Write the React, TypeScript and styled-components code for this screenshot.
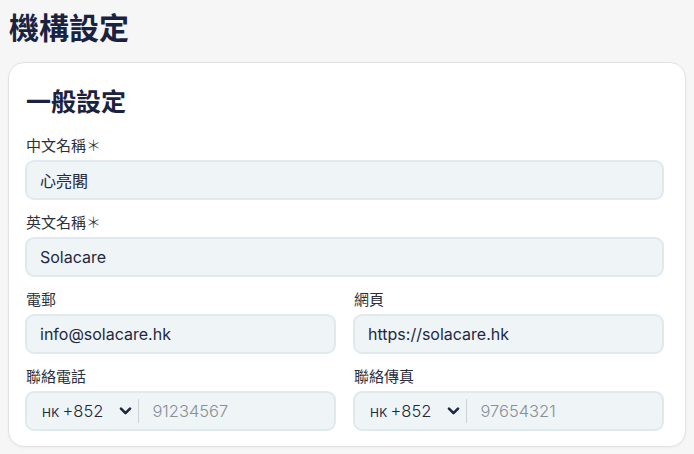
import React from "react";
import styled, { createGlobalStyle } from "styled-components";

const Global = createGlobalStyle`
  html, body { margin: 0; padding: 0; background: #f6f6f6; }
  body { font-family: "Inter", "Noto Sans CJK TC", sans-serif; color: #1c2540; }
  * { box-sizing: border-box; }
`;

const Page = styled.div`
  padding: 5px 8px 8px 8px;
`;

const Title = styled.h1`
  margin: 0 0 15px 1px;
  font-family: "Noto Sans CJK TC", sans-serif;
  font-size: 30px;
  line-height: 42px;
  font-weight: 700;
  color: #1a2242;
`;

const Card = styled.section`
  background: #fff;
  border: 1px solid #e2e2e2;
  border-radius: 16px;
  padding: 19px 21px 15px 16px;
  box-shadow: 0 1px 3px rgba(0, 0, 0, 0.04);
`;

const CardTitle = styled.h2`
  margin: 0 0 16px 1px;
  font-family: "Noto Sans CJK TC", sans-serif;
  font-size: 25px;
  line-height: 36px;
  font-weight: 700;
  color: #1a2242;
`;

const Grid = styled.div`
  display: grid;
  grid-template-columns: 1fr 1fr;
  column-gap: 17px;
  row-gap: 11px;
`;

const Field = styled.div<{ $full?: boolean }>`
  display: flex;
  flex-direction: column;
  gap: 4px;
  grid-column: ${(p) => (p.$full ? "1 / -1" : "auto")};
`;

const Label = styled.label`
  font-family: "Noto Sans CJK TC", sans-serif;
  font-size: 15px;
  line-height: 22px;
  color: #2b2f3a;
  padding-left: 1px;
`;

const Star = styled.span`
  font-weight: 300;
`;

const Box = styled.div`
  height: 40px;
  background: #eff4f7;
  border: 2px solid #e0e9ed;
  border-radius: 9px;
  display: flex;
  align-items: center;
  padding: 0 13px;
  font-size: 16px;
  color: #1e2940;
`;

const Value = styled.span`
  font-family: "Inter", "Noto Sans CJK TC", sans-serif;
`;

const CjkValue = styled.span`
  font-family: "Noto Sans CJK TC", sans-serif;
  font-size: 16px;
`;

const Code = styled.span`
  display: flex;
  align-items: baseline;
  gap: 3px;
  font-size: 16.5px;
  font-weight: 300;
  color: #1e2940;
  padding-left: 2px;
`;

const Flag = styled.span`
  font-size: 12px;
  font-weight: 400;
  letter-spacing: 0.3px;
`;

const Chevron = styled.svg`
  margin-left: 16px;
  width: 13px;
  height: 8px;
  flex: none;
`;

const Divider = styled.span`
  width: 1px;
  height: 24px;
  background: #cbd3d8;
  margin: 0 13px 0 6px;
`;

const Placeholder = styled.span`
  color: #8a8f96;
  font-size: 16.5px;
  font-weight: 300;
`;

function Phone({ placeholder }: { placeholder: string }) {
  return (
    <Box>
      <Code>
        <Flag>HK</Flag>
        <span>+852</span>
      </Code>
      <Chevron viewBox="0 0 13 8" fill="none" stroke="#1e2940" strokeWidth="2.6" strokeLinecap="round" strokeLinejoin="round">
        <path d="M2 1.6l4.5 4.5 4.5-4.5" />
      </Chevron>
      <Divider />
      <Placeholder>{placeholder}</Placeholder>
    </Box>
  );
}

export default function App() {
  return (
    <>
      <Global />
      <Page>
        <Title>機構設定</Title>
        <Card>
          <CardTitle>一般設定</CardTitle>
          <Grid>
            <Field $full>
              <Label>中文名稱<Star>＊</Star></Label>
              <Box><CjkValue>心亮閣</CjkValue></Box>
            </Field>
            <Field $full>
              <Label>英文名稱<Star>＊</Star></Label>
              <Box><Value>Solacare</Value></Box>
            </Field>
            <Field>
              <Label>電郵</Label>
              <Box><Value>info@solacare.hk</Value></Box>
            </Field>
            <Field>
              <Label>網頁</Label>
              <Box><Value>https://solacare.hk</Value></Box>
            </Field>
            <Field>
              <Label>聯絡電話</Label>
              <Phone placeholder="91234567" />
            </Field>
            <Field>
              <Label>聯絡傳真</Label>
              <Phone placeholder="97654321" />
            </Field>
          </Grid>
        </Card>
      </Page>
    </>
  );
}
